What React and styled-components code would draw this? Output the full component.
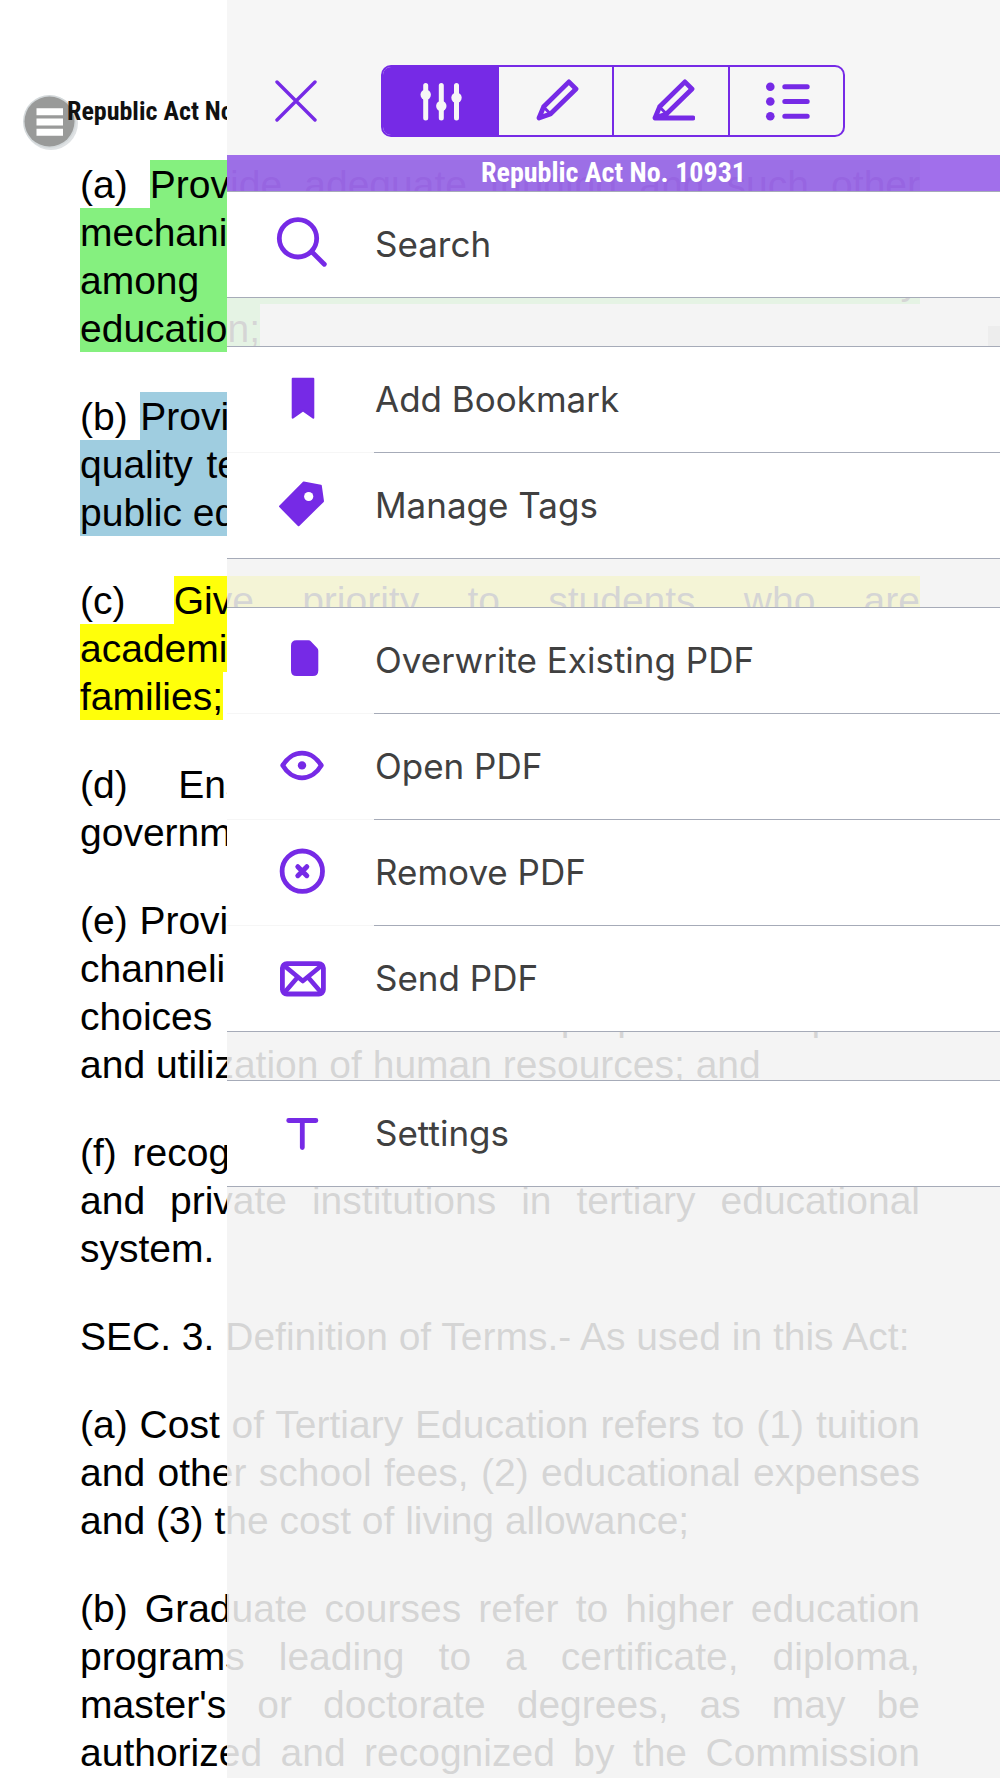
import React, { useState } from 'react'
import styled, { createGlobalStyle, css } from 'styled-components'

const PURPLE = '#762ae6'
const RULE = '#a6abb8'

const GlobalStyle = createGlobalStyle`
    * {
        box-sizing: border-box;
    }
    body {
        margin: 0;
        background: #fff;
    }
    button {
        margin: 0;
        padding: 0;
        border: 0;
        background: none;
        font: inherit;
        color: inherit;
        cursor: pointer;
    }
`

const paragraphs = [
    {
        label: '(a)',
        color: '#85f07f',
        lines: [
            'Provide adequate funding and such other',
            'mechanisms to increase the participation rate',
            'among all socioeconomic classes in tertiary',
            'education;',
        ],
    },
    {
        label: '(b)',
        color: '#9fcde0',
        lines: [
            'Provide all Filipinos with equal opportunity to',
            'quality tertiary education in both the private and',
            'public educational institutions;',
        ],
    },
    {
        label: '(c)',
        color: '#ffff0a',
        lines: [
            'Give priority to students who are',
            'academically able and who come from poor',
            'families;',
        ],
    },
    {
        label: '(d)',
        lines: [
            'Ensure the optimized utilization of',
            'government resources in education;',
        ],
    },
    {
        label: '(e)',
        lines: [
            'Provide adequate guidance and incentives in',
            'channeling young Filipinos in their career',
            'choices and towards the proper development',
            'and utilization of human resources; and',
        ],
    },
    {
        label: '(f)',
        lines: [
            'recognize the complementary roles of public',
            'and private institutions in tertiary educational',
            'system.',
        ],
    },
    {
        label: 'SEC. 3.',
        lines: ['Definition of Terms.- As used in this Act:'],
    },
    {
        label: '(a)',
        lines: [
            'Cost of Tertiary Education refers to (1) tuition',
            'and other school fees, (2) educational expenses',
            'and (3) the cost of living allowance;',
        ],
    },
    {
        label: '(b)',
        continues: true,
        lines: [
            'Graduate courses refer to higher education',
            'programs leading to a certificate, diploma,',
            "master's or doctorate degrees, as may be",
            'authorized and recognized by the Commission',
        ],
    },
]

const SearchIcon = () => (
    <RowSvg viewBox='0 0 56 57'>
        <circle cx='24' cy='22.3' r='18.7' strokeWidth='4.8' />
        <path d='M38 36 50.3 48.3' strokeWidth='4.8' />
    </RowSvg>
)

const BookmarkIcon = () => (
    <RowSvg viewBox='0 0 56 57'>
        <path
            d='M18.7 7.7H39.3V46.7L29 39.4 18.7 46.7Z'
            fill={PURPLE}
            strokeWidth='2'
        />
    </RowSvg>
)

const TagIcon = () => (
    <RowSvg viewBox='0 0 56 57'>
        <path
            d='M29.7 5.4 46.8 8.7 49 24.2 24.6 48.2 6 29.4Z'
            fill={PURPLE}
            strokeWidth='2'
        />
        <circle cx='34.7' cy='19.5' r='4.6' fill='#fff' stroke='none' />
    </RowSvg>
)

const FileIcon = () => (
    <RowSvg viewBox='0 0 56 57'>
        <path
            d='M22.5 8.3H34.5Q36 8.3 37 9.4L43.2 16Q44.3 17.2 44.3 18.8V38.5Q44.3 44 38.8 44H22.5Q17 44 17 38.5V13.8Q17 8.3 22.5 8.3Z'
            fill={PURPLE}
            stroke='none'
        />
    </RowSvg>
)

const EyeIcon = () => (
    <RowSvg viewBox='0 0 56 57'>
        <path
            d='M8.7 27.4C12.5 21 19.5 15.2 28 15.2S43.5 21 47.3 27.4C43.5 34 36.5 39.8 28 39.8S12.5 34 8.7 27.4Z'
            strokeWidth='4.8'
        />
        <circle cx='28' cy='27.4' r='4.2' fill={PURPLE} stroke='none' />
    </RowSvg>
)

const RemoveIcon = () => (
    <RowSvg viewBox='0 0 56 57'>
        <circle cx='28.3' cy='27.2' r='20.2' strokeWidth='4.8' />
        <path d='M23.8 22.7 32.8 31.7M32.8 22.7 23.8 31.7' strokeWidth='5' />
    </RowSvg>
)

const MailIcon = () => (
    <RowSvg viewBox='0 0 56 57'>
        <rect x='8.4' y='13.6' width='41' height='30.4' rx='4.5' strokeWidth='4.8' />
        <path
            d='M10 15.5 28.8 31 47.6 15.5M10.5 42.5 23 28M47.2 42.5 34.7 28'
            strokeWidth='4.6'
        />
    </RowSvg>
)

const TextIcon = () => (
    <RowSvg viewBox='0 0 56 57'>
        <path d='M14.7 15.5H41.9M28.3 15.5V42.5' strokeWidth='4.8' />
    </RowSvg>
)

const SlidersIcon = () => (
    <TabSvg viewBox='0 0 48 48' $active>
        <path d='M9.7 8.5V41M25.3 8.5V41M40.5 8.5V41' strokeWidth='5' />
        <circle cx='9.7' cy='17.7' r='5.2' />
        <circle cx='25.3' cy='29' r='5.2' />
        <circle cx='40.5' cy='20.8' r='5.2' />
    </TabSvg>
)

const PencilIcon = () => (
    <TabSvg viewBox='0 0 48 48'>
        <path d='M8 41 12.6 29.8 37.9 4.9 45 12 19.4 37Z' strokeWidth='4.8' />
        <path d='M13.4 30.8 18.8 36.2' strokeWidth='3' />
    </TabSvg>
)

const HighlightIcon = () => (
    <TabSvg viewBox='0 0 48 48'>
        <path
            d='M46 41H8L12.6 29.8 37.9 4.9 45 12 19.4 37 8 41'
            strokeWidth='4.8'
        />
        <path d='M13.4 30.8 18.8 36.2' strokeWidth='3' />
    </TabSvg>
)

const ListIcon = () => (
    <TabSvg viewBox='0 0 48 48'>
        <path d='M22.8 9.8H45.2M22.8 24.5H45.2M22.8 39.3H45.2' strokeWidth='5' />
        <g fill={PURPLE} stroke='none'>
            <circle cx='8.3' cy='9.8' r='4.3' />
            <circle cx='8.3' cy='24.5' r='4.3' />
            <circle cx='8.3' cy='39.3' r='4.3' />
        </g>
    </TabSvg>
)

const tabs = [
    { name: 'Options', icon: <SlidersIcon /> },
    { name: 'Notes', icon: <PencilIcon /> },
    { name: 'Highlights', icon: <HighlightIcon /> },
    { name: 'Contents', icon: <ListIcon /> },
]

const groups = [
    [{ label: 'Search', icon: <SearchIcon /> }],
    [
        { label: 'Add Bookmark', icon: <BookmarkIcon /> },
        { label: 'Manage Tags', icon: <TagIcon /> },
    ],
    [
        { label: 'Overwrite Existing PDF', icon: <FileIcon /> },
        { label: 'Open PDF', icon: <EyeIcon /> },
        { label: 'Remove PDF', icon: <RemoveIcon /> },
        { label: 'Send PDF', icon: <MailIcon /> },
    ],
    [{ label: 'Settings', icon: <TextIcon /> }],
]

const Reader = () => (
    <Article>
        <ArticleHeader>
            <MenuButton aria-label='Menu'>
                <svg width='58' height='58' viewBox='0 0 58 58'>
                    <circle cx='30' cy='30' r='27' fill='#dfe2e4' />
                    <circle cx='28.5' cy='28.5' r='26.5' fill='#d3d8da' />
                    <circle cx='28.5' cy='28.5' r='25' fill='#999a99' />
                    <path
                        d='M15.5 18.7H42M15.5 29H42M15.5 39.3H42'
                        stroke='#fff'
                        strokeWidth='7'
                    />
                </svg>
            </MenuButton>
            <h1>Republic Act No. 10931</h1>
        </ArticleHeader>
        <Body>
            {paragraphs.map(({ label, color, continues, lines }, index) => (
                <Paragraph key={index} $continues={continues}>
                    {lines.map((line, lineIndex) => (
                        <Line key={line}>
                            {lineIndex === 0 && `${label} `}
                            {color ? <Mark $color={color}>{line}</Mark> : line}
                        </Line>
                    ))}
                </Paragraph>
            ))}
        </Body>
        <ScrollTab />
    </Article>
)

const OptionsPanel = () => {
    const [active, setActive] = useState(0)

    return (
        <Panel>
            <Toolbar>
                <CloseButton aria-label='Close'>
                    <svg width='42' height='42' viewBox='0 0 42 42'>
                        <path
                            d='M2 2 40 40M40 2 2 40'
                            stroke={PURPLE}
                            strokeWidth='3.4'
                            strokeLinecap='round'
                        />
                    </svg>
                </CloseButton>
                <Segments>
                    {tabs.map(({ name, icon }, index) => (
                        <Segment
                            key={name}
                            aria-label={name}
                            $active={index === active}
                            onClick={() => setActive(index)}
                        >
                            {icon}
                        </Segment>
                    ))}
                </Segments>
            </Toolbar>
            <Title>Republic Act No. 10931</Title>
            <Menu>
                {groups.map((items, index) => (
                    <Group key={index}>
                        {items.map(({ label, icon }) => (
                            <Row key={label}>
                                <RowIcon>{icon}</RowIcon>
                                <RowLabel>{label}</RowLabel>
                            </Row>
                        ))}
                    </Group>
                ))}
            </Menu>
        </Panel>
    )
}

const App = () => (
    <Screen>
        <GlobalStyle />
        <Reader />
        <OptionsPanel />
    </Screen>
)

const condensed = css`
    font-family: 'Roboto Condensed', Roboto, 'Liberation Sans', sans-serif;
    font-weight: 700;
`

const Screen = styled.main`
    position: relative;
    height: 100vh;
    overflow: hidden;
`

const Article = styled.article`
    color: #000;
`

const ArticleHeader = styled.header`
    display: flex;
    align-items: flex-start;
    height: 161px;
    padding: 93px 0 0 21px;
    h1 {
        ${condensed}
        position: relative;
        margin: 0 0 0 -12px;
        font-size: 26px;
        line-height: 36px;
        color: #111;
    }
`

const MenuButton = styled.button`
    width: 58px;
    height: 58px;
    svg {
        display: block;
    }
`

const Body = styled.div`
    padding: 0 80px;
    font-family: 'Liberation Sans', Arial, sans-serif;
    font-size: 39px;
    line-height: 48px;
`

const Line = styled.span`
    display: block;
    white-space: nowrap;
    text-align: justify;
    text-align-last: justify;
`

const Paragraph = styled.p`
    margin: 0 0 40px;
    ${Line}:last-child {
        text-align-last: ${({ $continues }) => ($continues ? 'justify' : 'left')};
    }
`

const Mark = styled.mark`
    padding: 3px 0 2px;
    color: inherit;
    background: ${({ $color }) => $color};
`

/* grey handle at the page edge, sits over the text */
const ScrollTab = styled.div`
    position: absolute;
    top: 326px;
    right: 0;
    width: 12px;
    height: 72px;
    background: #c4c4c4;
`

const Panel = styled.aside`
    position: absolute;
    inset: 0 0 0 227px;
    background: rgba(242, 242, 242, 0.88);
`

const Toolbar = styled.div`
    display: flex;
    align-items: center;
    gap: 64px;
    height: 155px;
    padding: 46px 155px 0 48px;
    background: #f6f6f6;
`

const CloseButton = styled.button`
    flex: none;
    width: 42px;
    height: 42px;
    svg {
        display: block;
    }
`

const Segments = styled.div`
    display: flex;
    flex: 1;
    height: 72px;
    border: 2px solid ${PURPLE};
    border-radius: 10px;
    overflow: hidden;
`

const Segment = styled.button`
    display: flex;
    flex: 1;
    align-items: center;
    justify-content: center;
    background: ${({ $active }) => ($active ? PURPLE : 'transparent')};
    & + & {
        border-left: 2px solid ${PURPLE};
    }
`

const TabSvg = styled.svg`
    width: 48px;
    height: 48px;
    fill: ${({ $active }) => ($active ? '#f6f6f6' : 'none')};
    stroke: ${({ $active }) => ($active ? '#f6f6f6' : PURPLE)};
    stroke-linecap: round;
    stroke-linejoin: round;
    circle {
        stroke: none;
    }
`

const Title = styled.h2`
    ${condensed}
    margin: 0;
    font-size: 28px;
    line-height: 36px;
    text-align: center;
    color: #fff;
    background: rgba(118, 42, 230, 0.66);
`

const Menu = styled.nav`
    display: flex;
    flex-direction: column;
    gap: 48px;
`

const Group = styled.div`
    border-top: 1px solid ${RULE};
`

const RowIcon = styled.span`
    display: flex;
    flex: none;
    align-items: center;
    justify-content: center;
    width: 147px;
    padding-left: 3px;
    border-bottom: 1px solid #f6f6f6;
`

const RowLabel = styled.span`
    display: flex;
    flex: 1;
    align-items: center;
    padding: 0 0 2px 1px;
    border-bottom: 1px solid ${RULE};
`

const Row = styled.button`
    display: flex;
    width: 100%;
    height: 106px;
    font-family: Inter, 'Open Sans', sans-serif;
    font-size: 35px;
    color: #404040;
    background: #fff;
    &:last-child ${RowIcon} {
        border-color: ${RULE};
    }
`

const RowSvg = styled.svg`
    width: 56px;
    height: 57px;
    fill: none;
    stroke: ${PURPLE};
    stroke-linecap: round;
    stroke-linejoin: round;
`

export default App
